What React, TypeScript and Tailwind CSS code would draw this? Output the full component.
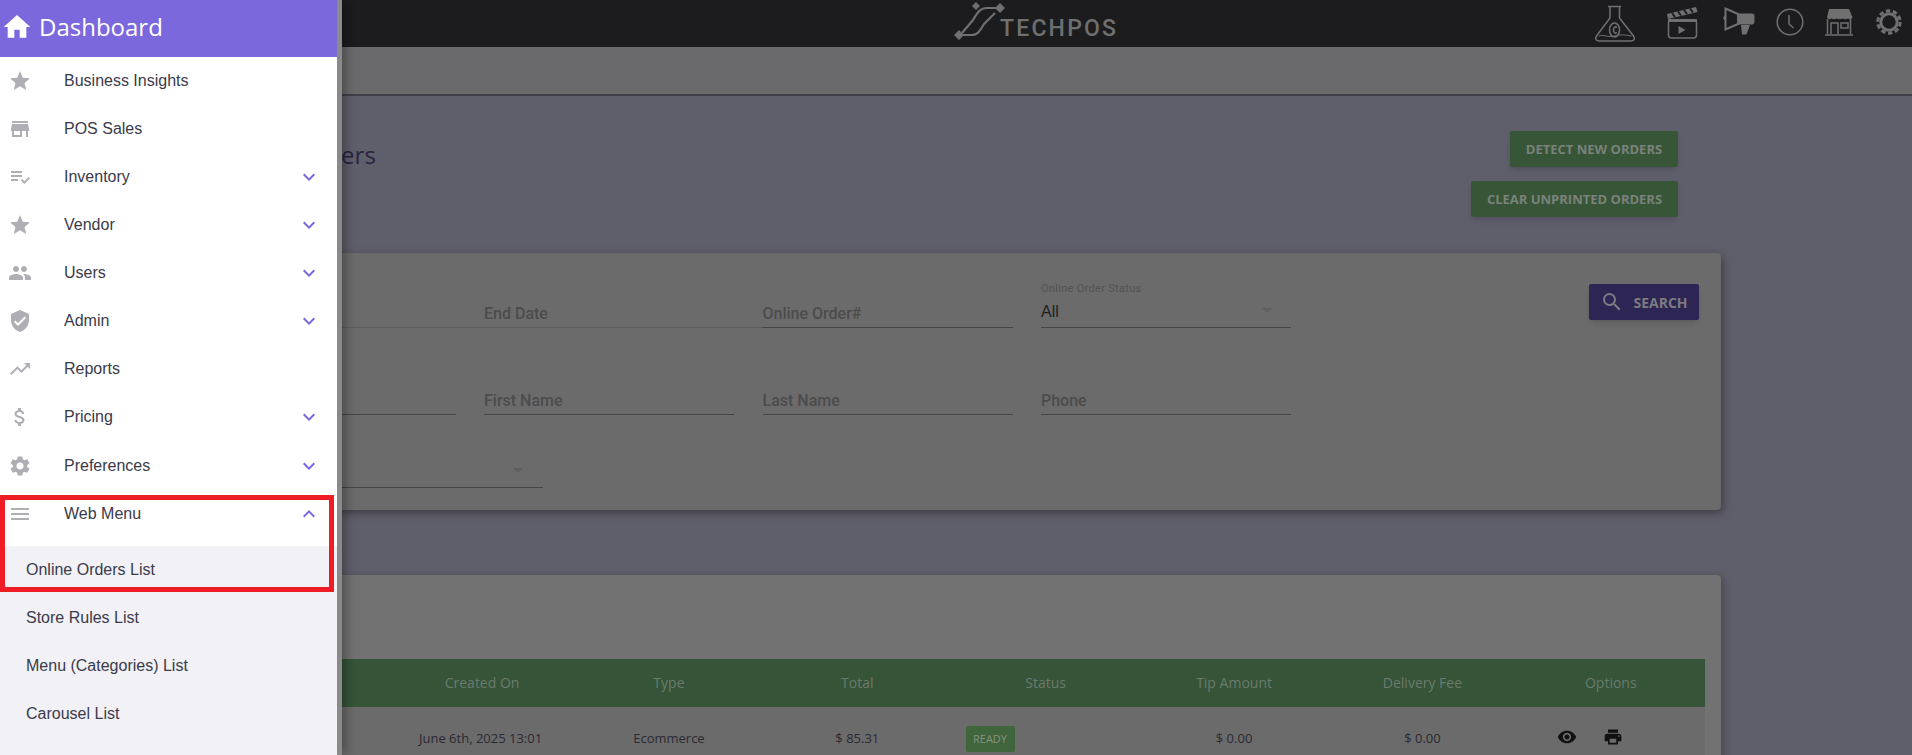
import {
  MdAttachMoney,
  MdExpandLess,
  MdExpandMore,
  MdHome,
  MdMenu,
  MdPeople,
  MdPlaylistAddCheck,
  MdPrint,
  MdRemoveRedEye,
  MdSearch,
  MdSettings,
  MdStar,
  MdStore,
  MdTrendingUp,
  MdVerifiedUser,
} from 'react-icons/md';
import type { IconType } from 'react-icons';

const navItems: { label: string; icon: IconType; arrow?: boolean; shift?: boolean }[] = [
  { label: 'Business Insights', icon: MdStar },
  { label: 'POS Sales', icon: MdStore },
  { label: 'Inventory', icon: MdPlaylistAddCheck, arrow: true },
  { label: 'Vendor', icon: MdStar, arrow: true },
  { label: 'Users', icon: MdPeople, arrow: true },
  { label: 'Admin', icon: MdVerifiedUser, arrow: true },
  { label: 'Reports', icon: MdTrendingUp },
  { label: 'Pricing', icon: MdAttachMoney, arrow: true },
  { label: 'Preferences', icon: MdSettings, arrow: true, shift: true },
];

const subItems = ['Online Orders List', 'Store Rules List', 'Menu (Categories) List', 'Carousel List'];
const columns = ['', 'Created On', 'Type', 'Total', 'Status', 'Tip Amount', 'Delivery Fee', 'Options'];

const Logo = () => (
  <svg width="60" height="47" viewBox="0 0 60 47" fill="none" stroke="#6f6f6f" strokeWidth="2.2" className="-mr-2">
    <path d="M9 30l5 5-5 5-5-5zM50 3l5 5-5 5-5-5zM26 2l4 4-4 4-4-4z" fill="#6f6f6f" stroke="none" />
    <path d="M50 8H37C29 8 27 14 23 20L12 33" />
    <path d="M9 35h13c6 0 9-6 12-11l11-11" />
  </svg>
);

const Flask = () => (
  <svg width="42" height="38" viewBox="0 0 42 38" fill="none" stroke="#707070" strokeWidth="1.5">
    <path d="M14 1.500h13M16 2v11L2.500 31c-2 3-.5 5 3 5h31c3.500 0 5-2 3-5L25.500 13V2" />
    <path d="M4.500 31c5-2 10 2 16 0s10-1 17 0" strokeWidth="1" />
    <ellipse cx="20.500" cy="25" rx="5" ry="7" />
    <path d="M23 22.500c-2-1.500-3.500 0-3.500 2.500s1.500 4 3.500 2.500" />
  </svg>
);

const Clapper = () => (
  <svg width="33" height="34" viewBox="0 0 33 34" fill="none" stroke="#707070" strokeWidth="1.5">
    <path d="M1 9L30 2l1.500 5L2 14z" fill="#707070" stroke="none" />
    <path d="M6 8l3 4M12 6.500l3 4M18 5l3 4M24 3.500l3 4" stroke="#1c1c1e" strokeWidth="2" />
    <path d="M2 14h29v3H2z" fill="#707070" stroke="none" />
    <path d="M2.500 17v13c0 2 1 3 3 3h22c2 0 3-1 3-3V17" />
    <path d="M12.500 21v8l7-4z" fill="#707070" stroke="none" />
  </svg>
);

const Megaphone = () => (
  <svg width="32" height="30" viewBox="0 0 32 30" fill="#707070">
    <path d="M2.500 1.500v21L15 17V7z" fill="none" stroke="#707070" strokeWidth="2" />
    <path d="M15 6.500h14c1.500 0 2.500 1 2.500 2.500v6c0 1.500-1 2-2 2.500H15z" />
    <path d="M18 18h9l-3 8c-.3 1-1 1.500-2 1.500h-3z" />
    <path d="M2 8l-2 3 2 3z" />
  </svg>
);

const Clock = () => (
  <svg width="28" height="28" viewBox="0 0 28 28" fill="none" stroke="#707070" strokeWidth="1.500">
    <circle cx="14" cy="14" r="12.800" />
    <path d="M13 7v9l4.500 4" />
  </svg>
);

const Shop = () => (
  <svg width="28" height="27" viewBox="0 0 28 27" fill="none" stroke="#707070" strokeWidth="1.500">
    <path d="M4 0h20l3.500 8.500c-1 2-3 2-4.500 1-1.500 1-4 1-5.500 0-1.500 1-4 1-5.500 0-1.500 1-4 1-5.500 0-1.500 1-3.500 1-4.500-1z" fill="#707070" stroke="none" />
    <path d="M2.500 10v15M25.500 10v15M0 26h28" />
    <path d="M6 25V14h7v11M16 14h7v5h-7z" />
  </svg>
);

const Gear = () => (
  <svg width="26" height="26" viewBox="0 0 26 26" fill="none" stroke="#707070">
    <circle cx="13" cy="13" r="11.200" strokeWidth="3" strokeDasharray="4.400 2.640" />
    <circle cx="13" cy="13" r="8.200" strokeWidth="3" />
  </svg>
);

const Field = ({ label, faint }: { label?: string; faint?: boolean }) => (
  <div className={`flex h-12 items-end border-b pb-[3px] ${faint ? 'w-[278.5px] border-[#5d5d5d]' : 'w-[250px] border-[#454545]'}`}>
    <span className="font-[Roboto,sans-serif] text-base leading-5 font-medium text-[#4c4c4d]">{label}</span>
  </div>
);

const Sidebar = () => (
  <aside className="absolute top-0 left-0 flex h-full w-[342px] flex-col overflow-hidden border-r-[5px] border-[#8a8a8a] bg-white shadow-[4px_0_10px_rgba(0,0,0,0.3)]">
    <div className="flex h-[57px] shrink-0 items-center bg-[#7b68dd] pb-[3px] pl-px font-['Open_Sans',sans-serif] text-2xl text-white">
      <MdHome size={32} />
      <span className="ml-1.5">Dashboard</span>
    </div>
    {navItems.map((item) => (
      <div key={item.label} className={`flex h-12 shrink-0 items-center pr-4 ${item.shift ? 'mt-px' : ''}`}>
        <item.icon size={24} className="ml-2 shrink-0 text-[#aeaeb4]" />
        <span className="ml-8 flex-1 font-['Liberation_Sans',Arial,sans-serif] text-base text-[#3a3a4a]">{item.label}</span>
        {item.arrow && <MdExpandMore size={24} className="text-[#7b68dd]" />}
      </div>
    ))}
    <div className="h-14 shrink-0">
      <div className="flex h-12 items-center pr-4">
        <MdMenu size={24} className="ml-2 shrink-0 text-[#aeaeb4]" />
        <span className="ml-8 flex-1 font-['Liberation_Sans',Arial,sans-serif] text-base text-[#3a3a4a]">Web Menu</span>
        <MdExpandLess size={24} className="text-[#7b68dd]" />
      </div>
    </div>
    <div className="flex-1 bg-[#f1f1f6]">
      {subItems.map((item) => (
        <div key={item} className="flex h-12 items-center pl-[26px] font-['Liberation_Sans',Arial,sans-serif] text-base text-[#3a3a4a]">
          {item}
        </div>
      ))}
    </div>
    {/* highlight from the screenshot */}
    <div className="absolute top-[495px] left-0 h-[97px] w-[334px] border-[5px] border-[#ee1c25]" />
  </aside>
);

export default function App() {
  return (
    <div className="relative h-[755px] w-[1912px] overflow-hidden bg-[#5f5e6b] font-['Open_Sans',sans-serif]">
      <header className="flex h-[47px] items-center bg-[#1c1c1e] pr-[10px]">
        <div className="ml-[950px] flex w-[175px] shrink-0 items-center">
          <Logo />
          <span className="pt-[9px] -ml-0.5 font-[Roboto,sans-serif] text-[23px] leading-none font-medium tracking-[2.2px] text-[#6f6f6f]">TECHPOS</span>
        </div>
        <div className="ml-auto flex items-center">
          <Flask />
          <div className="-mt-[3px] ml-[30px]"><Clapper /></div>
          <div className="-mt-[3px] ml-[24px]"><Megaphone /></div>
          <div className="-mt-[3px] ml-[21px]"><Clock /></div>
          <div className="-mt-[3px] ml-[21px]"><Shop /></div>
          <div className="-mt-[3px] ml-[23px]"><Gear /></div>
        </div>
      </header>
      <div className="h-[49px] border-b-2 border-[#433f4a] bg-[#6a6a6c]" />

      <div className="flex justify-between pt-[35px] pr-[234px] pl-[218px]">
        <h1 className="mt-[8px] text-2xl leading-8 font-normal text-[#262540]">Online Orders</h1>
        <div className="flex flex-col items-end gap-3.5 text-[13px] font-bold text-[#7b817b]">
          <button className="flex h-9 w-[168px] items-center justify-center rounded-[2px] bg-[#375638] pt-0.5 shadow-md">DETECT NEW ORDERS</button>
          <button className="flex h-9 w-[207px] items-center justify-center rounded-[2px] bg-[#375638] pt-0.5 shadow-md">CLEAR UNPRINTED ORDERS</button>
        </div>
      </div>

      <section className="mt-9 mr-[191px] ml-[182px] flex h-[257px] justify-between rounded bg-[#6b6b6b] pt-[27px] pr-[22px] pl-[23.5px] shadow-[2px_3px_8px_rgba(0,0,0,0.35)]">
        <div className="flex flex-col">
          <div className="flex">
            <Field faint />
            <Field label="End Date" faint />
            <Field label="Online Order#" />
            <div className="relative ml-[28.5px] h-12 w-[250px] border-b border-[#454545] font-['Liberation_Sans',Arial,sans-serif]">
              <div className="pt-[2px] font-[Roboto,sans-serif] text-[11px] leading-[14px] tracking-[0.3px] text-[#525253]">Online Order Status</div>
              <div className="mt-1.5 text-base leading-5 text-[#1f1f22]">All</div>
              <div className="absolute top-7 right-[19px] h-0 w-0 border-x-[5px] border-t-[5px] border-x-transparent border-t-[#5f5f5f]" />
            </div>
          </div>
          <div className="mt-[39px] flex gap-[28.5px]">
            <Field />
            <Field label="First Name" />
            <Field label="Last Name" />
            <Field label="Phone" />
          </div>
          <div className="relative mt-[25px] h-12 w-[337px] border-b border-[#454545]">
            <div className="absolute top-7 right-[20px] h-0 w-0 border-x-[5px] border-t-[5px] border-x-transparent border-t-[#5f5f5f]" />
          </div>
        </div>
        <button className="mt-1 flex h-9 w-[110px] items-center justify-center gap-[9px] rounded-[2px] bg-[#2d2553] text-sm font-bold text-[#7b7b81] shadow-md">
          <MdSearch size={24} />
          <span className="pt-px">SEARCH</span>
        </button>
      </section>

      <section className="mt-[65px] mr-[191px] ml-[182px] h-[300px] rounded bg-[#727272] px-4 pt-[84px] shadow-[2px_3px_8px_rgba(0,0,0,0.3)]">
        <div className="grid h-12 grid-cols-8 items-center bg-[#355438] text-center text-sm text-[#6c7a6d]">
          {columns.map((col, i) => (
            <div key={i} className={i === 1 ? 'pl-[3px]' : ''}>{col}</div>
          ))}
        </div>
        <div className="grid h-[100px] grid-cols-8 bg-[#6b6b6b] pt-[19px] text-center text-[13px] leading-6 text-[#2a2a33]">
          <div />
          <div>June 6th, 2025 13:01</div>
          <div>Ecommerce</div>
          <div>$ 85.31</div>
          <div className="pl-[14px] text-left">
            <span className="flex h-[26px] w-[49px] items-center justify-center rounded-[2px] bg-[#40653d] text-[11px] text-[#84947f]">READY</span>
          </div>
          <div>$ 0.00</div>
          <div>$ 0.00</div>
          <div className="flex items-start gap-[26px] pt-px pl-[40px] text-[#111113]">
            <MdRemoveRedEye size={20} />
            <MdPrint size={20} />
          </div>
        </div>
      </section>

      <Sidebar />
    </div>
  );
}
